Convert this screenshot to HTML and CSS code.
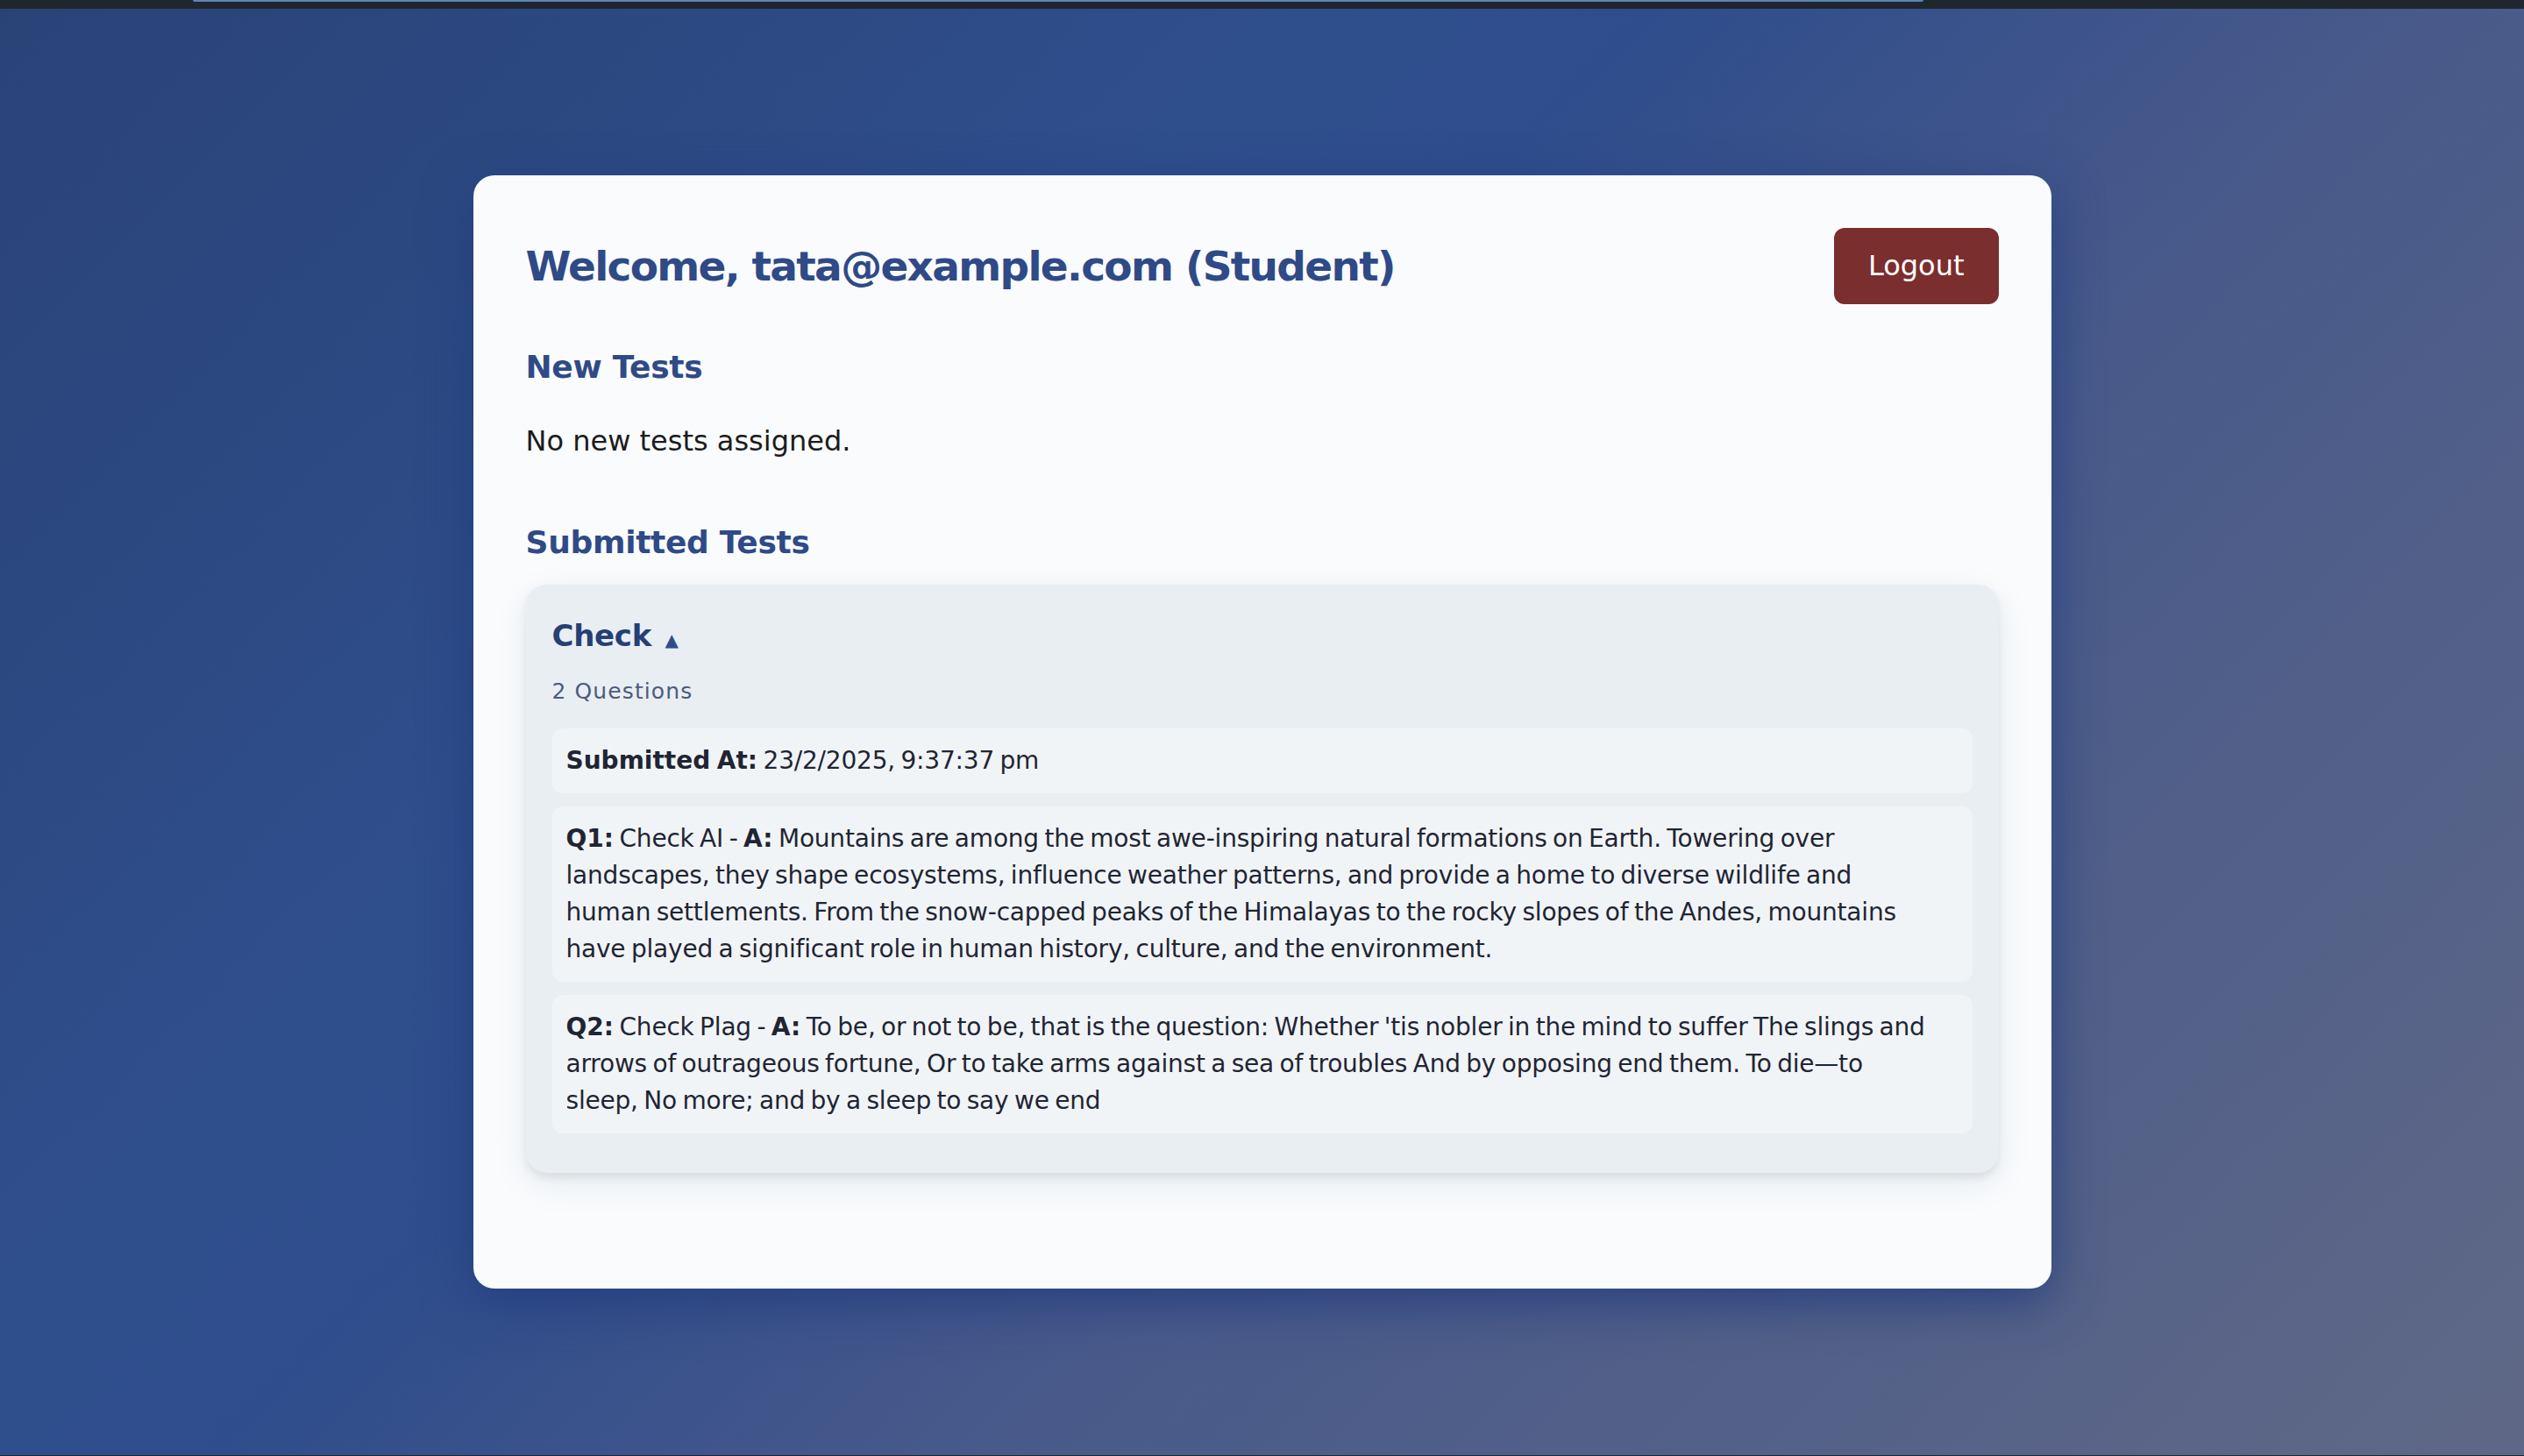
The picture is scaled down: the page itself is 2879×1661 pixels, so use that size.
FILE: index.html
```html
<!DOCTYPE html>
<html lang="en">
<head>
<meta charset="utf-8">
<title>Student Dashboard</title>
<link rel="stylesheet" href="styles.css">
</head>
<body>
<div class="topbar"><div class="topbar-progress"></div></div>
<main class="page">
  <section class="card">
    <header class="card-header">
      <h1 class="welcome">Welcome, tata@example.com (Student)</h1>
      <button class="logout" type="button">Logout</button>
    </header>

    <h2 class="section-title">New Tests</h2>
    <p class="empty">No new tests assigned.</p>

    <h2 class="section-title section-title--submitted">Submitted Tests</h2>
    <div class="test-list">
      <article class="test">
        <h3 class="test-title"><span class="test-name">Check</span> <span class="caret">▲</span></h3>
        <p class="test-count">2 Questions</p>
        <div class="test-item"><strong>Submitted At:</strong><span> 23/2/2025, 9:37:37 pm</span></div>
        <div class="test-item"><strong>Q1:</strong><span> Check AI - </span><strong>A:</strong><span> Mountains are among the most awe-inspiring natural formations on Earth. Towering over landscapes, they shape ecosystems, influence weather patterns, and provide a home to diverse wildlife and human settlements. From the snow-capped peaks of the Himalayas to the rocky slopes of the Andes, mountains have played a significant role in human history, culture, and the environment.</span></div>
        <div class="test-item"><strong>Q2:</strong><span> Check Plag - </span><strong>A:</strong><span> To be, or not to be, that is the question: Whether 'tis nobler in the mind to suffer The slings and arrows of outrageous fortune, Or to take arms against a sea of troubles And by opposing end them. To die—to sleep, No more; and by a sleep to say we end</span></div>
      </article>
    </div>
  </section>
</main>
<div class="bottombar"></div>
</body>
</html>
```
FILE: styles.css
```css
* { box-sizing: border-box; }

html, body { height: 100%; }

body {
  margin: 0;
  min-height: 100vh;
  display: flex;
  flex-direction: column;
  font-family: "DejaVu Sans", "Noto Sans", sans-serif;
  color: #1c1c1c;
  background: linear-gradient(135deg, #2a4377 0%, #2f4e8c 33%, #2f4d8c 42%, #495a8a 62%, #5f6886 100%);
}

.topbar {
  height: 10px;
  flex: 0 0 10px;
  background: #1f262d;
  padding-left: 220px;
}

.topbar-progress {
  width: 1974px;
  height: 2px;
  background: #5e83b8;
  border-radius: 0 0 2px 2px;
}

.bottombar {
  height: 1px;
  flex: 0 0 1px;
  background: #1f262d;
}

.page {
  flex: 1;
  display: flex;
  align-items: center;
  justify-content: center;
}

.card {
  width: 1800px;
  padding: 60px;
  border-radius: 24px;
  background: #f9fbfd;
  box-shadow: 0 16px 56px rgba(34, 60, 126, 0.85);
}

.card-header {
  display: flex;
  align-items: center;
  justify-content: space-between;
}

.welcome {
  margin: 0;
  font-size: 47px;
  line-height: 56px;
  font-weight: 700;
  color: #2f4a86;
  letter-spacing: -1.7px;
}

.logout {
  font-family: inherit;
  font-size: 32px;
  line-height: 47px;
  padding: 20px 39px;
  border: 0;
  border-radius: 12px;
  background: #7b2e2e;
  color: #ffffff;
}

.section-title {
  margin: 50px 0 0;
  font-size: 36px;
  line-height: 1.2;
  font-weight: 700;
  color: #2f4a86;
  letter-spacing: -0.3px;
}

.section-title--submitted {
  margin-top: 70px;
}

.empty {
  margin: 38px 0 0;
  font-size: 32px;
  line-height: 48px;
  color: #1c1c1c;
}

.test-list {
  margin: 27px 0 72px;
}

.test {
  padding: 38px 30px 30px;
  border-radius: 24px;
  background: #e9eef2;
  box-shadow: 0 6px 10px rgba(40, 60, 80, 0.10), 0 12px 40px rgba(40, 60, 80, 0.08);
}

.test-title {
  margin: 0;
  font-size: 34px;
  line-height: 40px;
  font-weight: 700;
  color: #263f75;
  letter-spacing: -0.3px;
}

.caret {
  margin-left: 4px;
  font-size: 20px;
  line-height: 1;
  color: #2f4d8c;
}

.test-count {
  margin: 26px 0 24px;
  font-size: 25px;
  line-height: 36px;
  color: #4b5c7d;
  letter-spacing: 1.1px;
}

.test-item {
  margin-bottom: 15px;
  padding: 16px 45px 16px 16px;
  border-radius: 12px;
  background: #f1f4f7;
  font-size: 28px;
  line-height: 42px;
  color: #1f2533;
  letter-spacing: -0.2px;
  word-spacing: -2.2px;
}

.test-item strong {
  font-weight: 700;
  letter-spacing: 0;
}
```
